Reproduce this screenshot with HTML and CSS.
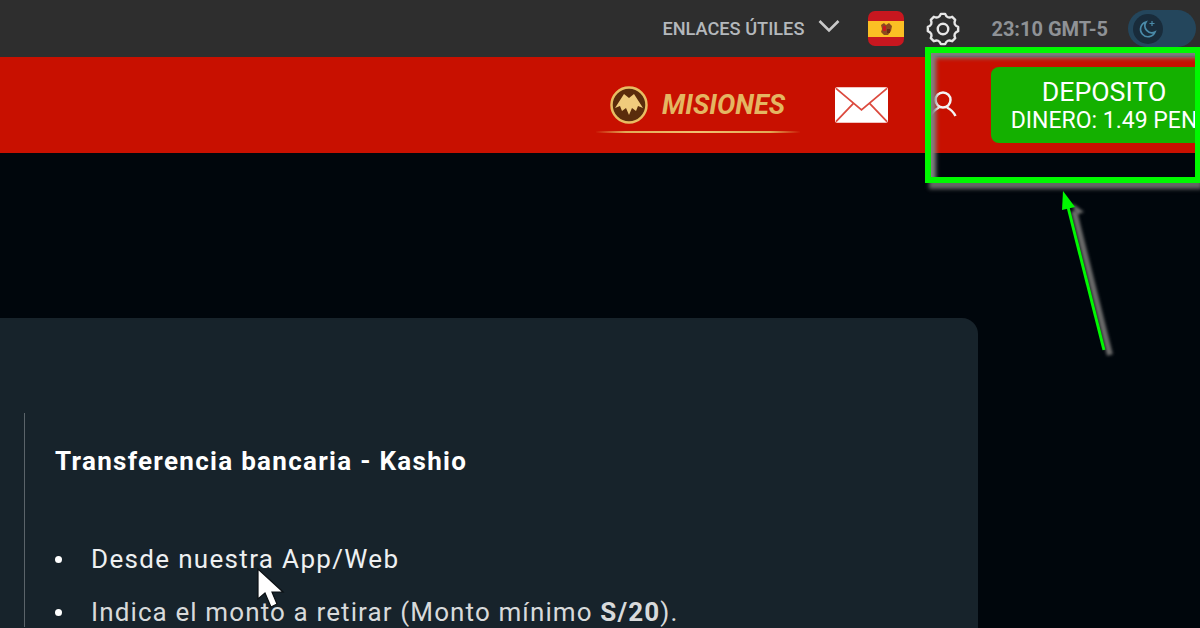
FILE: index.html
```html
<!DOCTYPE html>
<html lang="es">
<head>
<meta charset="utf-8">
<title>Deposito</title>
<link rel="stylesheet" href="styles.css">
</head>
<body>
<header class="topbar">
  <span class="links">ENLACES ÚTILES</span>
  <svg class="chevron" width="22" height="14" viewBox="0 0 22 14"><path d="M1.500 2 L11 11.500 L20.500 2" fill="none" stroke="#c9c9c9" stroke-width="2.600"/></svg>
  <svg class="flag" width="36" height="36" viewBox="0 0 36 36">
    <defs><clipPath id="flagClip"><rect width="36" height="35" rx="7"/></clipPath></defs>
    <g clip-path="url(#flagClip)">
      <rect width="36" height="35" fill="#c8171f"/>
      <rect y="10" width="36" height="16" fill="#fbbf24"/>
      <path d="M13 14 L16 12 L18 14 L21 12 L24 15 L23 20 L20 24 L16 24 L13 21 L14 18z" fill="#8d4a1e"/>
      <rect x="15" y="15" width="3" height="5" fill="#c8171f"/>
      <rect x="19" y="18" width="3" height="4" fill="#6b2a14"/>
    </g>
  </svg>
  <svg class="gear" width="34" height="34" viewBox="0 0 24 24" fill="none" stroke="#e6e6e6" stroke-width="1.700" stroke-linejoin="round">
    <circle cx="12" cy="12" r="3.700"/>
    <path d="M10.500 1.300 L13.500 1.300 Q14.870 5.070 18.500 3.370 L20.630 5.500 Q18.930 9.130 22.700 10.500 L22.700 13.500 Q18.930 14.870 20.630 18.500 L18.500 20.630 Q14.870 18.930 13.500 22.700 L10.500 22.700 Q9.130 18.930 5.500 20.630 L3.370 18.500 Q5.070 14.870 1.300 13.500 L1.300 10.500 Q5.070 9.130 3.370 5.500 L5.500 3.370 Q9.130 5.070 10.500 1.300z"/>
  </svg>
  <span class="clock">23:10 GMT-5</span>
  <div class="toggle">
    <span class="knob">
      <svg width="22" height="22" viewBox="0 0 22 22" fill="none" stroke="#4a8aa8" stroke-width="1.700"><path d="M9 4 A7.500 7.500 0 1 0 18 14 A7 7 0 0 1 9 4z"/><path d="M15 3v5M12.500 5.500h5" stroke-width="1.200"/></svg>
    </span>
  </div>
</header>

<nav class="mainbar">
  <div class="missions">
    <svg width="40" height="40" viewBox="0 0 40 40">
      <circle cx="20" cy="20" r="17.500" fill="#5a2c0c" stroke="#e8bd62" stroke-width="2.500"/>
      <path d="M20 13 L15 9 L6 23 L11 21 L13 26 L17 23 L20 30 L23 23 L27 26 L29 21 L34 23 L25 9z" fill="#f0cb7c"/>
    </svg>
    <span class="missions-label">MISIONES</span>
  </div>
  <svg class="mail" width="53" height="36" viewBox="0 0 54 36">
    <rect width="54" height="36" rx="2" fill="#fff"/>
    <path d="M1 1 L27 23 L53 1 M1 35 L19 16 M53 35 L35 16" fill="none" stroke="#dc4a3e" stroke-width="1.800"/>
  </svg>
  <svg class="user" width="30" height="30" viewBox="0 0 30 30" fill="none" stroke="#f4f4f4" stroke-width="2.500">
    <circle cx="15" cy="10" r="7.500"/>
    <path d="M2.500 26 C5 21 9 18.500 11 17.500 M27.500 26 C25 21 21 18.500 19 17.500"/>
  </svg>
  <button class="deposit">
    <span class="deposit-title">DEPOSITO</span>
    <span class="deposit-sub">DINERO: 1.49 PEN</span>
  </button>
</nav>

<main class="content">
  <section class="card">
    <div class="quote">
      <p class="quote-title">Transferencia bancaria - Kashio</p>
      <ul class="steps">
        <li class="step-main"><span>Desde nuestra App/Web</span></li>
        <li><span>Indica el monto a retirar (Monto mínimo <b>S/20</b>).</span></li>
      </ul>
    </div>
  </section>
</main>

<!-- annotations on top of the screenshot -->
<div class="mark"></div>
<svg class="arrow" width="70" height="190" viewBox="0 0 70 190">
  <defs><filter id="soft" x="-50%" y="-10%" width="200%" height="120%"><feGaussianBlur stdDeviation="1.500"/></filter></defs>
  <path d="M22 18 L34 27 L26 30z" fill="#6a6a6a" filter="url(#soft)"/>
  <path d="M24 26 L60 170" stroke="#6a6a6a" stroke-width="6" filter="url(#soft)"/>
  <path d="M13 6 L12 25 L25 22z" fill="#00f800"/>
  <path d="M18 22 L54 165" stroke="#00f800" stroke-width="3"/>
</svg>
<svg class="cursor" width="30" height="44" viewBox="0 0 30 44">
  <path d="M1 1 L1 31 L8 25 L14 39 L20 36 L15 24 L26 24z" fill="#fff" stroke="#0b1014" stroke-width="1.200"/>
</svg>
</body>
</html>
```

FILE: styles.css
```css
html, body {
    margin: 0;
    padding: 0;
    height: 628px;
    overflow: hidden;
    background-color: #00060c;
    font-family: Roboto, "Liberation Sans", sans-serif;
}
.topbar {
    display: flex;
    align-items: center;
    justify-content: flex-end;
    height: 57px;
    padding-right: 4px;
    box-sizing: border-box;
    background-color: #2e2e2e;
}
.links {
    margin-right: 14px;
    color: #b4b8bc;
    font-size: 18.200px;
    font-weight: 500;
}
.chevron {
    margin: -5px 28px 0 0;
}
.flag {
    margin-right: 22px;
}
.gear {
    margin-right: 31px;
}
.clock {
    margin-right: 20px;
    color: #8f9296;
    font-size: 20px;
    font-weight: 700;
}
.toggle {
    display: flex;
    align-items: center;
    width: 68px;
    height: 37px;
    padding-left: 5px;
    box-sizing: border-box;
    background-color: #24465c;
    border-radius: 19px;
}
.knob {
    display: flex;
    align-items: center;
    justify-content: center;
    width: 30px;
    height: 30px;
    background-color: #192c3b;
    border-radius: 50%;
}
.mainbar {
    display: flex;
    align-items: center;
    justify-content: flex-end;
    height: 96px;
    background-color: #c81000;
}
.missions {
    display: flex;
    align-items: center;
    gap: 13px;
    flex-shrink: 0;
    width: 204px;
    height: 58px;
    margin: 0 35px 2px 0;
    padding: 4px 0 0 13px;
    box-sizing: border-box;
    border-bottom: 2px solid;
    border-image: linear-gradient(to right, transparent, #e2aa55 15%, #f0c070 50%, #e2aa55 85%, transparent) 1;
    background: radial-gradient(ellipse closest-side at 50% 100%, #d8401c, rgba(200, 16, 0, 0));
}
.missions-label {
    color: #e4b662;
    font-size: 27.300px;
    font-weight: 700;
    font-style: italic;
}
.mail {
    flex-shrink: 0;
    margin-right: 40px;
}
.user {
    flex-shrink: 0;
    margin-right: 33px;
}
.deposit {
    display: flex;
    flex-direction: column;
    align-items: center;
    flex-shrink: 0;
    width: 226px;
    height: 76px;
    margin-right: -17px;
    padding: 9px 0 0;
    box-sizing: border-box;
    color: #fff;
    font-family: inherit;
    background-color: #14b000;
    border: 0;
    border-radius: 8px;
}
.deposit-title {
    font-size: 26.700px;
    line-height: 32px;
}
.deposit-sub {
    font-size: 23px;
    line-height: 26px;
    white-space: nowrap;
}
.content {
    padding-top: 165px;
}
.card {
    width: 978px;
    height: 310px;
    padding-top: 95px;
    overflow: hidden;
    box-sizing: border-box;
    background-color: #17232b;
    border-radius: 0 16px 0 0;
}
.quote {
    margin-left: 24px;
    padding: 33px 0 0 30px;
    color: #d8dadb;
    font-size: 26px;
    border-left: 1px solid #5b646a;
}
.quote-title {
    margin: 0 0 68px;
    color: #fff;
    font-weight: 700;
    line-height: 30px;
    letter-spacing: 1.300px;
}
.steps {
    margin: 0;
    padding: 0;
    list-style: none;
    letter-spacing: 1.120px;
}
.steps li {
    display: flex;
    align-items: center;
    margin-bottom: 23px;
    line-height: 30px;
    white-space: nowrap;
}
.steps li:before {
    content: '';
    width: 7px;
    height: 7px;
    margin-right: 29px;
    background-color: #fff;
    border-radius: 50%;
}
.steps .step-main {
    color: #eef0f1;
    letter-spacing: 1.330px;
}
.mark {
    position: absolute;
    left: 925px;
    top: 47px;
    width: 275px;
    height: 136px;
    box-sizing: border-box;
    border: 6px solid #00f800;
    border-right-width: 5px;
    box-shadow: 3px 7px 4px -1px #666, inset 7px 7px 4px -2px #808080;
}
.arrow {
    position: absolute;
    left: 1050px;
    top: 185px;
}
.cursor {
    position: absolute;
    left: 257px;
    top: 568px;
}
```
